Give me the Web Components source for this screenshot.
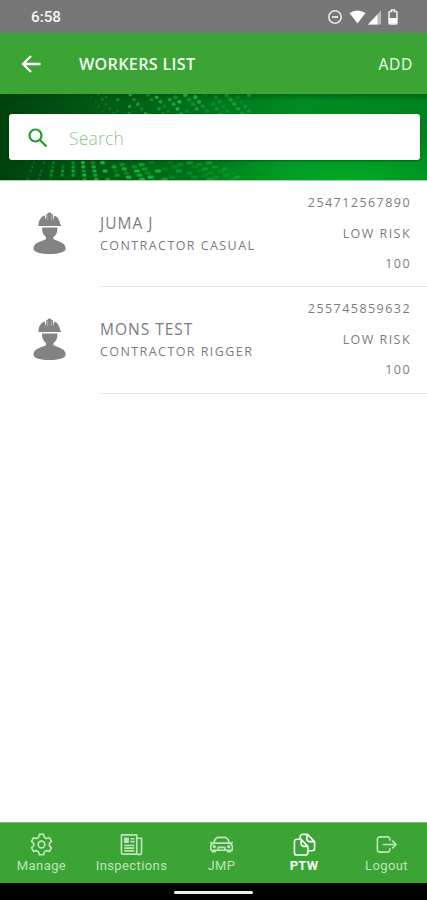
<!DOCTYPE html>
<html lang="en">
<head>
<meta charset="UTF-8">
<meta name="viewport" content="width=device-width, initial-scale=1">
<title>Workers List</title>
<style>
  html, body { margin: 0; height: 100%; background: #fff; }
  body { font-family: "Open Sans", "Noto Sans", sans-serif; overflow: hidden; }
</style>
</head>
<body>
<workers-app></workers-app>

<script>
// Status bar
class StatusBar extends HTMLElement {
  constructor() {
    super();
    this.attachShadow({ mode: 'open' });
  }

  connectedCallback() {
    this.shadowRoot.innerHTML = `
      <style>
        :host { display: flex; align-items: center; justify-content: space-between; height: 33px; flex: none;
          background: #777; color: #f5f5f5; padding: 1px 28px 0 31px; box-sizing: border-box;
          font: 500 15.2px Roboto, sans-serif; }
        svg { display: block; }
      </style>
      <span>${this.getAttribute('time')}</span>
      <svg width="72" height="16" viewBox="0 0 72 16" fill="none">
        <circle cx="8" cy="8" r="6.200" stroke="#e6e6e6" stroke-width="1.600"/>
        <path d="M5 8h6" stroke="#e6e6e6" stroke-width="1.900"/>
        <path d="M22.500 4Q30.500-1 38.500 4L30.500 14.500Z" fill="#fff"/>
        <path d="M41 15.500L54 1.500V15.500Z" fill="#bbb"/>
        <path d="M41 15.500L50.500 5.500V15.500Z" fill="#fff"/>
        <path d="M63 2.500h1.500V1h3v1.500H69a1 1 0 0 1 1 1V14a1 1 0 0 1-1 1h-6a1 1 0 0 1-1-1V3.500a1 1 0 0 1 1-1z" stroke="#f2f2f2" stroke-width="1.500"/>
        <path d="M62 9h8v5.500h-8z" fill="#fff"/>
      </svg>
    `;
  }
}
customElements.define('status-bar', StatusBar);

// Title bar with the back arrow and one text action
class TitleBar extends HTMLElement {
  constructor() {
    super();
    this.attachShadow({ mode: 'open' });
  }

  connectedCallback() {
    this.shadowRoot.innerHTML = `
      <style>
        :host { display: flex; align-items: center; height: 61px; flex: none; box-sizing: border-box;
          background: #3ba435; color: #f4fbf3; padding: 0 14px 0 21px; }
        svg { display: block; margin-right: 38px; }
        .title { flex: 1; font-size: 16.200px; font-weight: 600; letter-spacing: .28px; }
        .action { font-size: 15.500px; letter-spacing: .7px; font-weight: 500; }
      </style>
      <svg width="20" height="18" viewBox="0 0 20 18" fill="none" stroke="#fff" stroke-width="2.300">
        <path d="M19.500 9H2M10 1L2 9l8 8"/>
      </svg>
      <span class="title"><slot></slot></span>
      <span class="action"><slot name="action"></slot></span>
    `;
  }
}
customElements.define('title-bar', TitleBar);

// Search field over a halftone banner
class SearchBanner extends HTMLElement {
  constructor() {
    super();
    this.attachShadow({ mode: 'open' });
  }

  // scattered glowing dots: a slanted field above the box, columns of blocks below it
  dots() {
    let out = '';
    const noise = (a, b) => {
      const v = Math.sin(a * 12.9898 + b * 78.233) * 43758.5453;
      return v - Math.floor(v);
    };
    for (let row = 0; row < 5; row++) {
      for (let col = 0; col < 20; col++) {
        const x = 84 + col * (7 + col * .12) + row * 3.8;
        const y = 1 + row * 4.6 + (col % 2) * 2.2;
        const n = noise(row + 2, col + 1);
        if (x > 252 || n < .25 || x - y * .8 < 82) continue;
        const o = (.1 + n * .65) * Math.min(1, (col + 1) / 6) * (x > 200 ? .6 : 1);
        const r = 1.1 + Math.min(col, 12) * .08;
        out += `<ellipse cx="${x.toFixed(1)}" cy="${y.toFixed(1)}" rx="${(r * 1.1).toFixed(1)}" ry="${r.toFixed(1)}" fill="#28c455" opacity="${o.toFixed(2)}"/>`;
      }
    }
    for (let row = 0; row < 5; row++) {
      for (let col = 0; col < 20; col++) {
        const x = 33 + col * 9.6 + row * (col - 4) * .42;
        const y = 67 + row * 4.2 + (col > 7 ? (col % 2) * 2 : 0);
        const n = noise(row + 9, col);
        if (x > 242 || n < .15) continue;
        const o = (.1 + n * .75) * Math.min(1, (col + 2) / 6) * (col > 13 ? .5 : 1);
        const w = 2 + Math.min(col, 11) * .38;
        out += `<rect x="${x.toFixed(1)}" y="${y.toFixed(1)}" width="${w.toFixed(1)}" height="3.200" rx="1.200" fill="#17cf45" opacity="${o.toFixed(2)}"/>`;
      }
    }
    return out;
  }

  connectedCallback() {
    this.shadowRoot.innerHTML = `
      <style>
        :host { display: grid; height: 87px; flex: none; overflow: hidden; border-bottom: 1px solid #a9d3ad;
          box-sizing: border-box; background:
            linear-gradient(#003b0966, transparent 7px),
            radial-gradient(ellipse 150px 55px at 345px 90px, #00ac27, transparent),
            linear-gradient(90deg, #00410c, #005713 20%, #007019 45%, #008b22 70%, #00831f); }
        :host > * { grid-area: 1 / 1; }
        .dots { display: block; filter: blur(.7px); }
        .box { margin: 20px 7px 20px 9px; height: 46px; background: #fff; border-radius: 3px; display: flex;
          align-items: center; box-shadow: 0 1px 2px #003c0a99; z-index: 1; }
        .box svg { margin: 2px 21px 0 19px; flex: none; }
        input { flex: 1; min-width: 0; border: 0; outline: 0; padding: 1px 0 0; background: none; height: 40px;
          font: 300 17.500px "Open Sans", sans-serif; letter-spacing: .2px; color: #3ba435; }
        input::placeholder { color: #8dc78d; opacity: 1; }
      </style>
      <svg class="dots" width="427" height="86">${this.dots()}</svg>
      <div class="box">
        <svg width="20" height="20" viewBox="0 0 20 20" fill="none" stroke="#239a2c" stroke-width="2.200">
          <circle cx="7.500" cy="7.500" r="6"/><path d="M12 12l6.500 6.500"/>
        </svg>
        <input type="text" placeholder="Search">
      </div>
    `;
  }
}
customElements.define('search-banner', SearchBanner);

// One worker in the list
class WorkerRow extends HTMLElement {
  constructor() {
    super();
    this.attachShadow({ mode: 'open' });
  }

  connectedCallback() {
    this.shadowRoot.innerHTML = `
      <style>
        :host { display: flex; height: 106.500px; color: #797c80; }
        .avatar { width: 100px; flex: none; box-sizing: border-box; padding: 31px 0 0 33px; }
        .avatar svg { display: block; }
        .body { flex: 1; display: flex; justify-content: space-between; border-bottom: 1px solid #e9e9e9;
          padding-right: 17px; white-space: nowrap; }
        .who { padding-top: 30px; }
        .name { font-size: 15.500px; line-height: 24px; letter-spacing: 1px; }
        .role { font-size: 12.500px; line-height: 22px; letter-spacing: 1.430px; }
        .facts { display: flex; flex-direction: column; align-items: flex-end; padding-top: 7px;
          font-size: 12.500px; line-height: 30.700px; letter-spacing: 1.450px; }
        .facts span { margin-right: -1px; }
      </style>
      <div class="avatar">
        <svg width="33" height="42" viewBox="0 0 33 42" fill="#838383">
          <path d="M5.500 13C5.500 8 8.500 4.500 11.500 3.200L13 8L13.300 2.200Q14 2 14.500 2L15 .8Q16.500 .2 18 .8L18.500 2L20 2.400L20.300 8L21.500 3.500C25 5 27 9 27 12L28 13V14H5Z"/>
          <path d="M14.700 3v5M18.400 3v5" stroke="#ccc" stroke-width=".6"/>
          <path d="M9 15.500H24.500C24.500 20 23.500 23 20.500 25V27C22 29 32.700 29.500 32.700 36.500C32.700 40.500 25 42 16.500 42S.5 40.500 .5 36.500C.5 29.500 11.500 29 13 27V25C10 23 9 20 9 15.500Z"/>
        </svg>
      </div>
      <div class="body">
        <div class="who">
          <div class="name">${this.getAttribute('name')}</div>
          <div class="role">${this.getAttribute('role')}</div>
        </div>
        <div class="facts">
          <span>${this.getAttribute('phone')}</span>
          <span>${this.getAttribute('risk')}</span>
          <span>${this.getAttribute('score')}</span>
        </div>
      </div>
    `;
  }
}
customElements.define('worker-row', WorkerRow);

const navIcons = {
  manage: `<circle cx="12" cy="12" r="3.500"/><path d="M9.800 1.500h4.400l.8 3 2.200 1.300 3-.9 2.200 3.800-2.200 2.200v2.400l2.200 2.200-2.200 3.800-3-.9-2.200 1.300-.8 3H9.800l-.8-3-2.200-1.300-3 .9-2.200-3.800 2.200-2.200v-2.400L1.600 8.700l2.200-3.800 3 .9L9 4.500z"/>`,
  inspections: `<path d="M17.500 22H3a1.500 1.500 0 0 1-1.500-1.500V2H17.500V20a2.500 2.500 0 0 0 5 0V5.500h-5M11 6h4M11 9h4M4.500 13h10.500M4.500 15.800h10.500M4.500 18.600h10.500"/><path d="M5 5.500h3.500v4H5z" fill="currentColor"/>`,
  jmp: `<path d="M3 11L6 6Q7 4.500 8.500 4.500h7q1.500 0 2.500 1.500l3 5Q23.300 12.500 23.300 14V17q0 1-1 1H1.700q-1 0-1-1v-3Q.7 12.500 3 11zM4 10.500h16M0 9.500l2.500 1.500M24 9.500l-2.500 1.500M8.500 17.500v-2.500h7v2.500M2.500 18v1.500h3V18M18.500 18v1.500h3V18"/><circle cx="4.500" cy="14.300" r=".8"/><circle cx="19.500" cy="14.300" r=".8"/>`,
  ptw: `<path d="M7 6.500H4A2.500 2.500 0 0 0 1.500 9v11.500A2.500 2.500 0 0 0 4 23h9a2.500 2.500 0 0 0 2.500-2.500V14L8.500 6.500V11a3 3 0 0 0 3 3h4M7.500 6.500V4A2.500 2.500 0 0 1 10 1.500h5L22.500 9v7a2.500 2.500 0 0 1-2.500 2.500h-4M14.500 1.500V6a3 3 0 0 0 3 3h5"/>`,
  logout: `<path d="M15.500 8V6.500A2.500 2.500 0 0 0 13 4H5A2.500 2.500 0 0 0 2.500 6.500v11A2.500 2.500 0 0 0 5 20h8a2.500 2.500 0 0 0 2.500-2.500V16M8 12h13.500M18 8l4 4-4 4"/>`
};

// Bottom navigation item
class NavItem extends HTMLElement {
  constructor() {
    super();
    this.attachShadow({ mode: 'open' });
  }

  connectedCallback() {
    this.shadowRoot.innerHTML = `
      <style>
        :host { display: flex; flex-direction: column; align-items: center; color: #bfe5bb;
          font: 400 13px/16px Roboto, sans-serif; letter-spacing: .4px; }
        :host([active]) { color: #f4fbf3; font-weight: 700; letter-spacing: .2px; }
        svg { display: block; width: 23px; height: 23px; margin-bottom: 2px; }
      </style>
      <svg viewBox="0 0 24 24" fill="none" stroke="currentColor" stroke-width="1.700" stroke-linejoin="round">${navIcons[this.getAttribute('icon')]}</svg>
      <slot></slot>
    `;
  }
}
customElements.define('nav-item', NavItem);

// Whole screen
class WorkersApp extends HTMLElement {
  constructor() {
    super();
    this.attachShadow({ mode: 'open' });
  }

  connectedCallback() {
    this.shadowRoot.innerHTML = `
      <style>
        :host { display: flex; flex-direction: column; width: 427px; height: 900px; background: #fff; }
        main { flex: 1; }
        worker-row:first-child { height: 106px; }
        nav { display: grid; grid-template-columns: 83px 97px 83px 82px 83px; height: 61px; flex: none;
          box-sizing: border-box; padding-top: 10px; background: #3ba435; border-top: 1px solid #7fc47b; }
        footer { height: 17px; flex: none; background: #000; display: flex; justify-content: center; align-items: center; }
        footer div { width: 79px; height: 3px; border-radius: 2px; background: #eee; margin-top: 1px; }
      </style>
      <status-bar time="6:58"></status-bar>
      <title-bar>WORKERS LIST<span slot="action">ADD</span></title-bar>
      <search-banner></search-banner>
      <main>
        <worker-row name="JUMA J" role="CONTRACTOR CASUAL" phone="254712567890" risk="LOW RISK" score="100"></worker-row>
        <worker-row name="MONS TEST" role="CONTRACTOR RIGGER" phone="255745859632" risk="LOW RISK" score="100"></worker-row>
      </main>
      <nav>
        <nav-item icon="manage">Manage</nav-item>
        <nav-item icon="inspections">Inspections</nav-item>
        <nav-item icon="jmp">JMP</nav-item>
        <nav-item icon="ptw" active>PTW</nav-item>
        <nav-item icon="logout">Logout</nav-item>
      </nav>
      <footer><div></div></footer>
    `;
  }
}
customElements.define('workers-app', WorkersApp);
</script>
</body>
</html>
